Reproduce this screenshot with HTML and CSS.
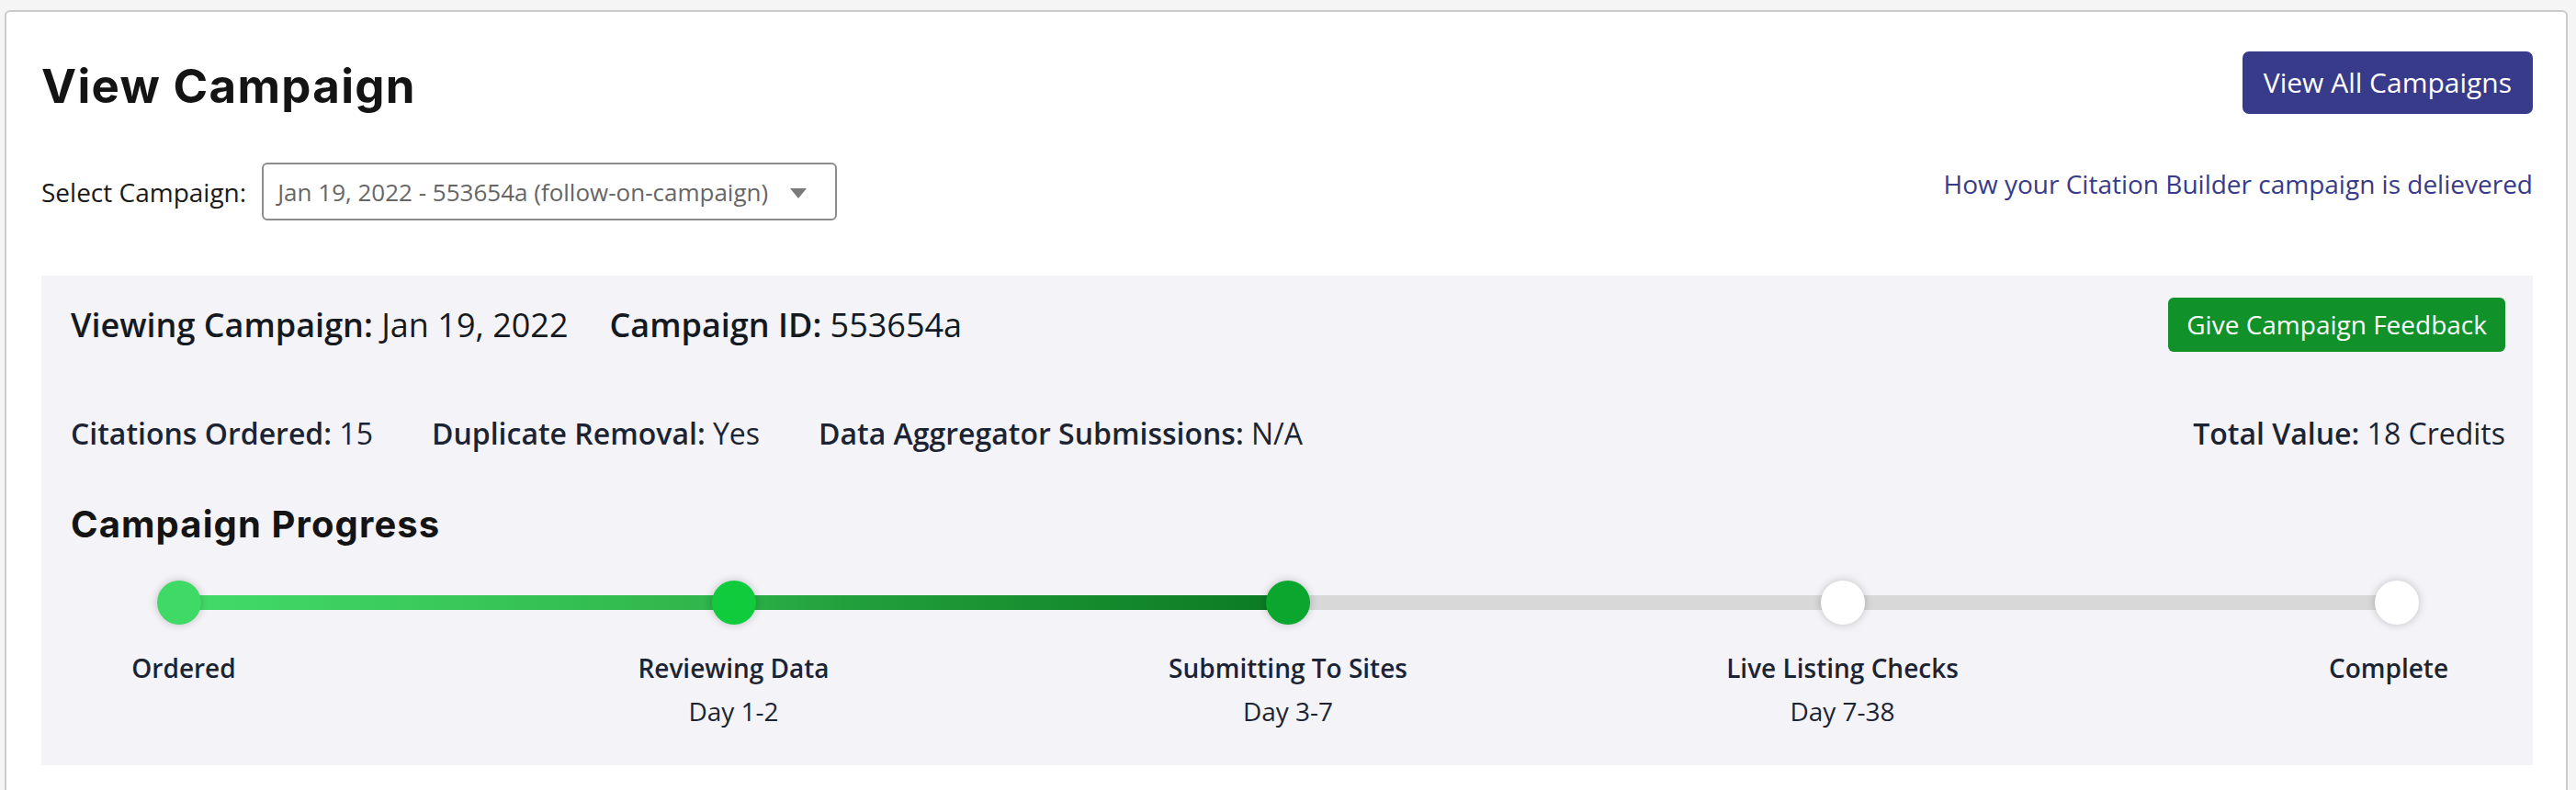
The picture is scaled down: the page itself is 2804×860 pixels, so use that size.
FILE: index.html
```html
<!DOCTYPE html>
<html lang="en">
<head>
<meta charset="utf-8">
<title>View Campaign</title>
<link rel="stylesheet" href="styles.css">
</head>
<body>
<div class="card">
  <header class="page-head">
    <h1 class="title">View Campaign</h1>
    <a class="btn btn-primary">View All Campaigns</a>
  </header>

  <div class="select-row">
    <label class="select-label">Select Campaign:</label>
    <div class="select">
      <span class="select-value">Jan 19, 2022 - 553654a (follow-on-campaign)</span>
      <span class="caret"></span>
    </div>
    <a class="help-link">How your Citation Builder campaign is delievered</a>
  </div>

  <section class="panel">
    <div class="panel-top">
      <div class="meta-main">
        <span><b>Viewing Campaign:</b> Jan 19, 2022</span>
        <span><b>Campaign ID:</b> 553654a</span>
      </div>
      <a class="btn btn-green">Give Campaign Feedback</a>
    </div>

    <div class="stats">
      <span><b>Citations Ordered:</b> 15</span>
      <span><b>Duplicate Removal:</b> Yes</span>
      <span><b>Data Aggregator Submissions:</b> N/A</span>
      <span class="stat-total"><b>Total Value:</b> 18 Credits</span>
    </div>

    <h2 class="progress-title">Campaign Progress</h2>

    <div class="progress">
      <div class="track"><div class="fill"></div></div>
      <div class="step step-first">
        <span class="dot dot-1"></span>
        <div class="step-name">Ordered</div>
      </div>
      <div class="step">
        <span class="dot dot-2"></span>
        <div class="step-name">Reviewing Data</div>
        <div class="step-days">Day 1-2</div>
      </div>
      <div class="step">
        <span class="dot dot-3"></span>
        <div class="step-name">Submitting To Sites</div>
        <div class="step-days">Day 3-7</div>
      </div>
      <div class="step">
        <span class="dot dot-todo"></span>
        <div class="step-name">Live Listing Checks</div>
        <div class="step-days">Day 7-38</div>
      </div>
      <div class="step step-last">
        <span class="dot dot-todo"></span>
        <div class="step-name">Complete</div>
      </div>
    </div>
  </section>
</div>
</body>
</html>
```

FILE: styles.css
```css
* { box-sizing: border-box; }

html, body {
  margin: 0;
  padding: 0;
  background: #f5f5f5;
}

body {
  font-family: "Open Sans", "Liberation Sans", sans-serif;
  color: #1c2434;
}

.card {
  margin: 11px 9px 0 5px;
  background: #ffffff;
  border: 2px solid #cbcbcb;
  border-radius: 6px;
  padding: 0 36px 40px 38px;
}

.page-head {
  display: flex;
  justify-content: space-between;
  align-items: flex-start;
  padding-top: 43px;
}

.title {
  margin: 7px 0 0;
  font-family: Inter, "DejaVu Sans", sans-serif;
  font-weight: 700;
  font-size: 51px;
  line-height: 61px;
  letter-spacing: 1.3px;
  color: #141414;
}

.btn {
  display: inline-block;
  color: #ffffff;
  text-decoration: none;
  white-space: nowrap;
  font-family: "Open Sans", "Liberation Sans", sans-serif;
}

.btn-primary {
  background: #383a8a;
  border-radius: 7px;
  height: 68px;
  line-height: 68px;
  padding: 0 23px;
  font-size: 30px;
}

.btn-green {
  background: #10912a;
  border-radius: 6px;
  height: 59px;
  line-height: 59px;
  padding: 0 20px;
  font-size: 28px;
}

.select-row {
  display: flex;
  align-items: center;
  margin-top: 53px;
  height: 63px;
}

.select-label {
  font-size: 28px;
  color: #1a1a1a;
  margin-right: 17px;
}

.select {
  width: 626px;
  height: 63px;
  border: 2px solid #8c8c8c;
  border-radius: 6px;
  display: flex;
  align-items: center;
  justify-content: space-between;
  padding: 0 31px 0 15px;
  background: #ffffff;
}

.select-value {
  font-size: 26px;
  color: #666666;
  white-space: nowrap;
}

.caret {
  width: 0;
  height: 0;
  border-left: 9px solid transparent;
  border-right: 9px solid transparent;
  border-top: 11px solid #7a7a7a;
  margin-top: 4px;
}

.help-link {
  margin-left: auto;
  align-self: flex-start;
  margin-top: 4px;
  font-size: 28px;
  line-height: 38px;
  color: #383a8a;
  text-decoration: none;
}

.panel {
  margin-top: 60px;
  background: #f4f4f8;
  padding: 24px 30px 40px 32px;
}

.panel-top {
  display: flex;
  align-items: center;
  justify-content: space-between;
}

.meta-main {
  display: flex;
  gap: 45px;
  font-size: 36px;
  line-height: 48px;
  color: #151a22;
}

.meta-main b,
.stats b {
  font-weight: 600;
}

.stats {
  display: flex;
  gap: 64px;
  margin-top: 67px;
  font-size: 32px;
  line-height: 43px;
  color: #1c2434;
}

.stat-total {
  margin-left: auto;
}

.progress-title {
  margin: 55px 0 0;
  font-family: Inter, "DejaVu Sans", sans-serif;
  font-weight: 700;
  font-size: 40px;
  line-height: 46px;
  letter-spacing: 1.1px;
  color: #141414;
}

.progress {
  position: relative;
  display: flex;
  justify-content: space-between;
  margin-top: 38px;
}

.track {
  position: absolute;
  left: 118px;
  right: 118px;
  top: 16px;
  height: 16px;
  background: #d8d8d8;
}

.fill {
  width: 50%;
  height: 100%;
  background: linear-gradient(to right, #43dc68 0%, #2fb54b 48%, #22a03c 60%, #0b7a22 100%);
}

.step {
  position: relative;
  width: 236px;
  display: flex;
  flex-direction: column;
  align-items: center;
}

.dot {
  display: block;
  width: 48px;
  height: 48px;
  border-radius: 50%;
  box-shadow: 0 0 10px rgba(0, 0, 0, 0.22);
}

.dot-1 { background: #3fd966; }
.dot-2 { background: #10cc3d; }
.dot-3 { background: #0aa62e; }
.dot-todo { background: #ffffff; }

.step-name {
  margin-top: 28px;
  font-size: 28px;
  line-height: 38px;
  font-weight: 600;
  color: #1c2434;
  white-space: nowrap;
}

.step-first .step-name {
  margin-left: 10px;
}

.step-last .step-name {
  margin-right: 18px;
}

.step-days {
  margin-top: 9px;
  font-size: 28px;
  line-height: 38px;
  color: #1c2434;
  white-space: nowrap;
}
```
